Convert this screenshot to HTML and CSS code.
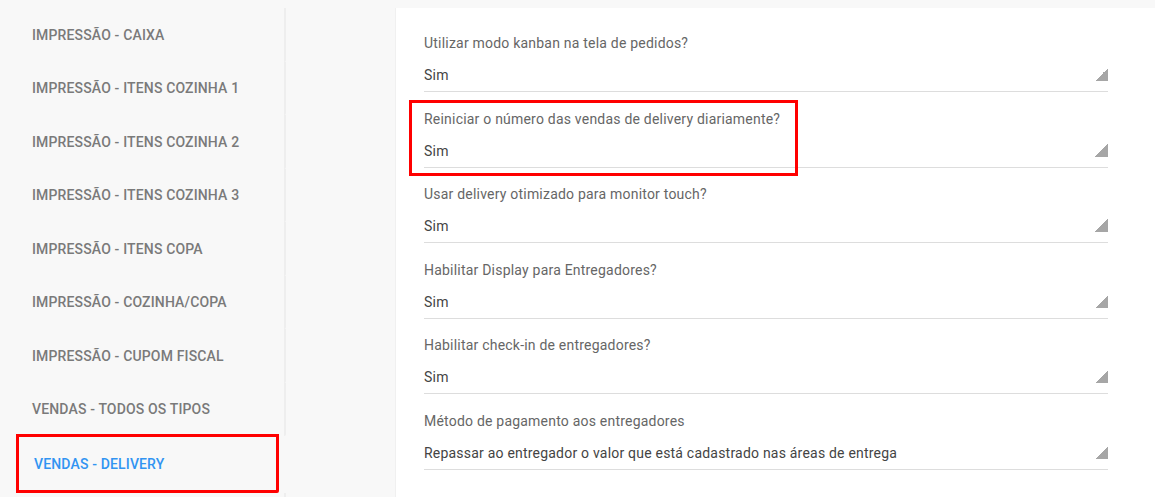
FILE: index.html
```html
<!DOCTYPE html>
<html lang="pt-BR">
<head>
<meta charset="utf-8">
<title>Configurações</title>
<link rel="stylesheet" href="styles.css">
</head>
<body>
<div class="page">
  <nav class="sidebar">
    <div class="nav-item">IMPRESSÃO - CAIXA</div>
    <div class="nav-item">IMPRESSÃO - ITENS COZINHA 1</div>
    <div class="nav-item">IMPRESSÃO - ITENS COZINHA 2</div>
    <div class="nav-item">IMPRESSÃO - ITENS COZINHA 3</div>
    <div class="nav-item">IMPRESSÃO - ITENS COPA</div>
    <div class="nav-item">IMPRESSÃO - COZINHA/COPA</div>
    <div class="nav-item">IMPRESSÃO - CUPOM FISCAL</div>
    <div class="nav-item">VENDAS - TODOS OS TIPOS</div>
    <div class="nav-item active">VENDAS - DELIVERY</div>
    <div class="nav-item tail"></div>
  </nav>
  <main class="panel">
    <div class="field">
      <div class="label">Utilizar modo kanban na tela de pedidos?</div>
      <div class="select"><span>Sim</span><i class="arrow"></i></div>
    </div>
    <div class="field">
      <div class="label">Reiniciar o número das vendas de delivery diariamente?</div>
      <div class="select"><span>Sim</span><i class="arrow"></i></div>
      <div class="highlight"></div>
    </div>
    <div class="field">
      <div class="label">Usar delivery otimizado para monitor touch?</div>
      <div class="select"><span>Sim</span><i class="arrow"></i></div>
    </div>
    <div class="field">
      <div class="label">Habilitar Display para Entregadores?</div>
      <div class="select"><span>Sim</span><i class="arrow"></i></div>
    </div>
    <div class="field">
      <div class="label">Habilitar check-in de entregadores?</div>
      <div class="select"><span>Sim</span><i class="arrow"></i></div>
    </div>
    <div class="field">
      <div class="label">Método de pagamento aos entregadores</div>
      <div class="select"><span>Repassar ao entregador o valor que está cadastrado nas áreas de entrega</span><i class="arrow"></i></div>
    </div>
  </main>
</div>
</body>
</html>
```

FILE: styles.css
```css
html, body {
  margin: 0;
  padding: 0;
  height: 100%;
  background: #f8f8f8;
  font-family: Roboto, "Liberation Sans", Arial, sans-serif;
  overflow: hidden;
}

.page {
  display: flex;
  align-items: flex-start;
  padding-top: 8px;
  height: 100%;
  box-sizing: border-box;
}

.sidebar {
  width: 286px;
  flex: none;
  display: flex;
  flex-direction: column;
}

.nav-item {
  height: 53.5px;
  display: flex;
  align-items: center;
  padding-left: 32px;
  box-sizing: border-box;
  border-right: 2px solid #eeeeee;
  border-radius: 0 0 2px 0;
  font-size: 14px;
  font-weight: 500;
  color: #7a7a7a;
  letter-spacing: 0.15px;
}

.nav-item.active {
  margin: -2px 7px 0 16px;
  height: 59px;
  padding-left: 15px;
  border: 3px solid #ff0000;
  color: #3194f2;
  padding-top: 1px;
}

.nav-item.tail {
  height: 20px;
}

.panel {
  margin-left: 109px;
  flex: 1;
  align-self: stretch;
  background: #ffffff;
  border-left: 1px solid #f0f0f0;
  padding: 25px 47px 0 28px;
  box-sizing: border-box;
}

.field {
  position: relative;
  margin-bottom: 16.5px;
}

.label {
  font-size: 14px;
  line-height: 20px;
  letter-spacing: 0.21px;
  color: #666666;
}

.select {
  position: relative;
  margin-top: 6px;
  height: 33px;
  box-sizing: border-box;
  border-bottom: 1px solid #dddddd;
  font-size: 14px;
  line-height: 32px;
  letter-spacing: 0.21px;
  color: #444444;
}

.arrow {
  position: absolute;
  right: 0;
  bottom: 10px;
  width: 13px;
  height: 13px;
  background: linear-gradient(to bottom right, transparent 50%, #a6a6a6 50%);
}

.highlight {
  position: absolute;
  left: -15px;
  top: -8.5px;
  width: 389px;
  height: 76px;
  box-sizing: border-box;
  border: 3px solid #ff0000;
  pointer-events: none;
}
```
